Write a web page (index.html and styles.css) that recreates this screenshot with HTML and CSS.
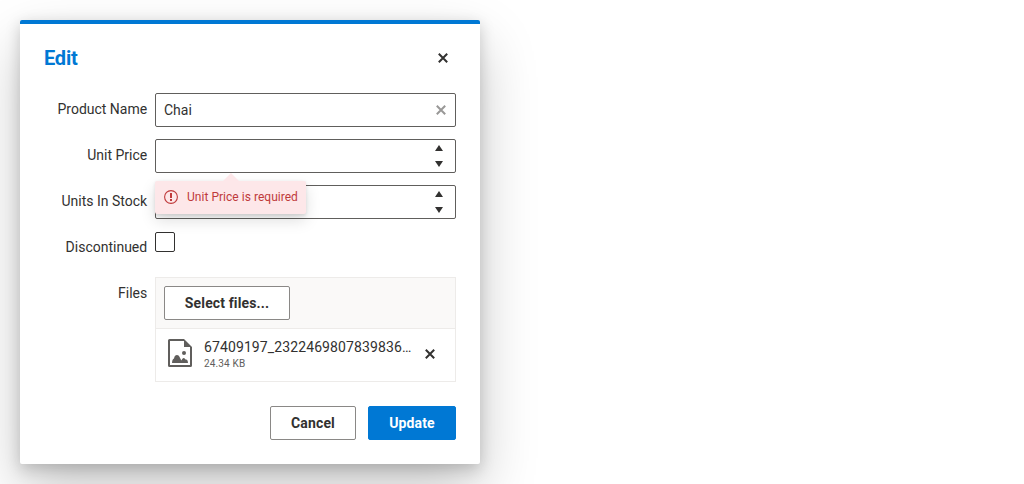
FILE: index.html
```html
<!DOCTYPE html>
<html lang="en">
<head>
<meta charset="utf-8">
<title>Edit</title>
<link rel="stylesheet" href="styles.css">
</head>
<body>
<section class="dialog" role="dialog" aria-labelledby="title">
  <header class="dialog-header">
    <h1 class="dialog-title" id="title">Edit</h1>
    <button class="icon-button" type="button" aria-label="Close"><svg class="cross" viewBox="0 0 10 10"><path d="M.8.8l8.4 8.4M9.2.8L.8 9.2"/></svg></button>
  </header>
  <form class="form">
    <div class="row">
      <div class="label">Product Name</div>
      <div class="field"><span class="value">Chai</span><span class="clear"><svg class="cross" viewBox="0 0 10 10"><path d="M.8.8l8.4 8.4M9.2.8L.8 9.2"/></svg></span></div>
    </div>
    <div class="row">
      <div class="label">Unit Price</div>
      <div class="field"><span class="spinner"><svg viewBox="0 0 8 6"><path d="M4 0l4 6H0z"/></svg><svg viewBox="0 0 8 6"><path d="M0 0h8L4 6z"/></svg></span>
        <div class="error" role="alert"><svg class="error-icon" viewBox="0 0 14 14"><circle cx="7" cy="7" r="6.4"/><path d="M6 3h2v5H6zM6 9h2v2H6z"/></svg><span>Unit Price is required</span></div>
      </div>
    </div>
    <div class="row">
      <div class="label">Units In Stock</div>
      <div class="field"><span class="spinner"><svg viewBox="0 0 8 6"><path d="M4 0l4 6H0z"/></svg><svg viewBox="0 0 8 6"><path d="M0 0h8L4 6z"/></svg></span></div>
    </div>
    <div class="row">
      <div class="label">Discontinued</div>
      <span class="checkbox" role="checkbox" aria-checked="false"></span>
    </div>
    <div class="row">
      <div class="label">Files</div>
      <div class="upload">
        <div class="upload-bar"><button class="button select" type="button">Select files...</button></div>
        <div class="file">
          <svg class="file-icon" viewBox="0 0 24 28"><path fill-rule="evenodd" d="M1.500 0H16l8 8v18.500a1.500 1.500 0 0 1-1.500 1.500h-21A1.500 1.500 0 0 1 0 26.500v-25A1.500 1.500 0 0 1 1.500 0zM2 2v24h20V8h-6V2z"/><circle cx="16" cy="14" r="2"/><path d="M4 24c.2-3.200 1-4.200 2-4.600C6.500 17 7.500 16 9 16c2.500 0 3 3.500 4.500 5.500C14 20 14.800 19 15.700 19c1 0 1.200 1 1.800 1.600 1.700-.4 2.500 1.400 2.500 3.400z"/></svg>
          <div class="file-text"><span class="file-name">67409197_2322469807839836…</span><span class="file-size">24.34 KB</span></div>
          <button class="icon-button remove" type="button" aria-label="Remove"><svg class="cross" viewBox="0 0 10 10"><path d="M.8.8l8.4 8.4M9.2.8L.8 9.2"/></svg></button>
        </div>
      </div>
    </div>
  </form>
  <footer class="actions">
    <button class="button cancel" type="button">Cancel</button>
    <button class="button primary" type="button">Update</button>
  </footer>
</section>
</body>
</html>
```
FILE: styles.css
```css
* { box-sizing: border-box; }

body {
  margin: 0;
  padding: 20px;
  height: 484px;
  overflow: hidden;
  background: #fff;
  color: #323130;
  font: 14px/20px Roboto, sans-serif;
}

.dialog {
  width: 460px;
  height: 444px;
  padding: 0 24px;
  border-top: 4px solid #0078d4;
  border-radius: 2px;
  background: #fff;
  box-shadow: 0 25.6px 57.6px rgba(0, 0, 0, .22), 0 4.8px 14.4px rgba(0, 0, 0, .18);
}

.dialog-header {
  display: flex;
  align-items: center;
  justify-content: space-between;
  height: 69px;
  padding-bottom: 1px;
}

.dialog-title {
  margin: 0;
  color: #0078d4;
  font-size: 20px;
  line-height: 28px;
  font-weight: 700;
  letter-spacing: -.2px;
}

.icon-button {
  display: flex;
  align-items: center;
  justify-content: center;
  width: 26px;
  height: 26px;
  padding: 0;
  border: 0;
  background: none;
  color: #323130;
}

.cross {
  display: block;
  width: 10px;
  height: 10px;
  fill: none;
  stroke: currentColor;
  stroke-width: 2;
}

.form {
  display: flex;
  flex-direction: column;
  gap: 12px;
}

.row {
  display: grid;
  grid-template-columns: 103px 301px;
  column-gap: 8px;
  min-height: 34px;
}

.label {
  margin-right: -.2px;
  padding-top: 6px;
  text-align: right;
}

.field {
  position: relative;
  display: flex;
  align-items: center;
  height: 34px;
  padding: 0 8px;
  border: 1px solid #605e5c;
  border-radius: 2px;
}

.value { flex: 1; }

.clear {
  padding-right: 1px;
  color: #999897;
}

.spinner {
  display: flex;
  flex-direction: column;
  gap: 10px;
  margin-left: auto;
  padding-right: 4px;
}

.spinner svg {
  display: block;
  width: 8px;
  height: 6px;
  fill: #323130;
}

.error {
  position: absolute;
  z-index: 1;
  top: 41px;
  left: -1px;
  display: flex;
  align-items: center;
  gap: 9px;
  width: 151px;
  height: 33px;
  padding: 0 0 1px 9px;
  border-radius: 2px;
  background: #fde7e9;
  color: #bf3a3b;
  font-size: 12px;
  line-height: 16px;
  letter-spacing: .03px;
  white-space: nowrap;
  box-shadow: 0 6.4px 14.4px rgba(0, 0, 0, .13), 0 1.2px 3.6px rgba(0, 0, 0, .11);
}

.error::before {
  content: "";
  position: absolute;
  top: -8px;
  left: 68px;
  border: solid transparent;
  border-width: 0 8px 8px;
  border-bottom-color: #fde7e9;
}

.error-icon {
  flex: none;
  width: 14px;
  height: 14px;
  fill: currentColor;
}

.error-icon circle {
  fill: none;
  stroke: currentColor;
  stroke-width: 1.1;
}

.checkbox {
  width: 20px;
  height: 20px;
  margin-top: 1px;
  border: 1px solid #323130;
  border-radius: 2px;
}

.upload {
  height: 105px;
  border: 1px solid #edebe9;
}

.upload-bar {
  height: 51px;
  padding: 8px;
  border-bottom: 1px solid #edebe9;
  background: #faf9f8;
}

.button {
  height: 34px;
  padding: 0;
  border: 1px solid #8a8886;
  border-radius: 2px;
  background: #fff;
  color: #323130;
  font: 700 14px/20px Roboto, sans-serif;
  letter-spacing: .13px;
}

.select { width: 126px; }

.cancel { width: 86px; }

.primary {
  width: 88px;
  border-color: #0078d4;
  background: #0078d4;
  color: #fff;
}

.file {
  display: flex;
  align-items: center;
  height: 52px;
  padding: 0 12px 2px;
}

.file-icon {
  flex: none;
  width: 24px;
  height: 28px;
  margin-top: -2px;
  fill: #605e5c;
}

.file-text {
  width: 208px;
  margin: -2px 0 0 12px;
}

.file-name {
  display: block;
  letter-spacing: .11px;
  white-space: nowrap;
}

.file-size {
  display: block;
  padding-top: 1px;
  color: #605e5c;
  font-size: 10px;
  line-height: 12px;
  letter-spacing: .15px;
}

.remove { margin-left: 5px; }

.actions {
  display: flex;
  justify-content: flex-end;
  gap: 12px;
  margin-top: 24px;
}
```
